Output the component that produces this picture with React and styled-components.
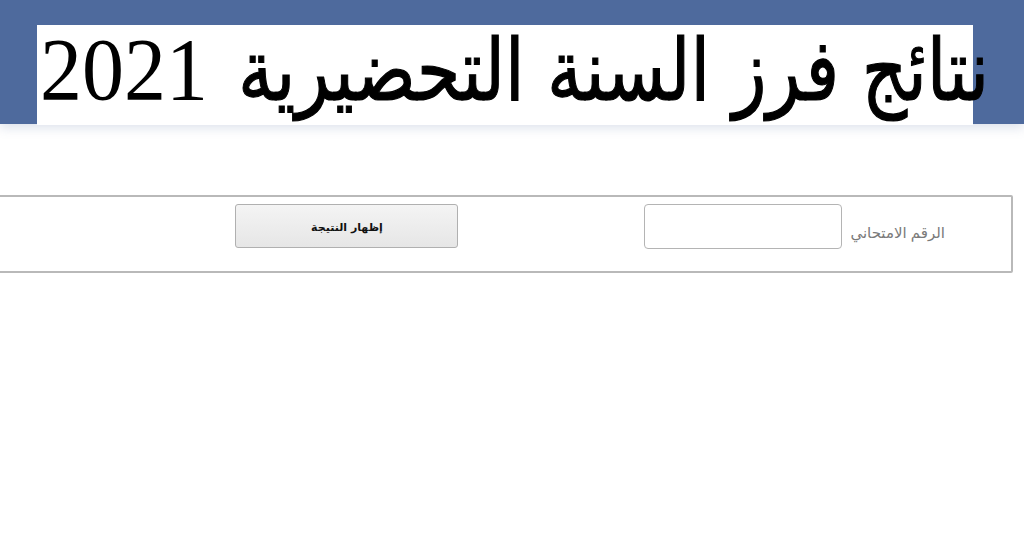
import React from "react";
import styled, { createGlobalStyle } from "styled-components";

const Global = createGlobalStyle`
  html, body { margin: 0; padding: 0; background: #ffffff; }
  body { width: 1024px; height: 558px; overflow: hidden; font-family: "Liberation Sans", "DejaVu Sans", sans-serif; }
`;

const Page = styled.div`
  width: 1024px;
  height: 558px;
  background: #ffffff;
  overflow: hidden;
  display: flex;
  flex-direction: column;
`;

const Banner = styled.header`
  height: 124px;
  background: #4e6a9d;
  padding: 25px 0 0 37px;
  box-sizing: border-box;
  position: relative;
  box-shadow: 0 4px 10px rgba(120, 140, 180, 0.25);
`;

const TitleBox = styled.div`
  width: 936px;
  height: 100px;
  background: #ffffff;
  display: flex;
  align-items: center;
  padding-left: 3px;
  box-sizing: border-box;
`;

const Title = styled.h1`
  margin: 0;
  flex: none;
  display: flex;
  align-items: baseline;
  white-space: nowrap;
  font-weight: normal;
  line-height: 1;
  color: #000000;
  position: relative;
  top: -5px;
`;

const Year = styled.span`
  order: 1;
  font-family: "Liberation Serif", serif;
  font-size: 84px;
  transform: scaleY(1.05);
  display: inline-block;
  transform-origin: center bottom;
  margin-right: 30px;
`;

const Words = styled.span`
  order: 2;
  display: inline-block;
  font-family: "DejaVu Sans", sans-serif;
  font-size: 86px;
  transform: scaleX(0.82);
  transform-origin: left center;
  -webkit-text-stroke: 1.2px #000;
`;

const Panel = styled.form`
  margin: 71px 0 0 -10px;
  width: 1023px;
  height: 78px;
  box-sizing: border-box;
  border: 2px solid #b9b9b9;
  border-radius: 2px;
  display: flex;
  align-items: flex-start;
  padding: 7px 66px 0 0;
`;

const Label = styled.span`
  font-size: 15px;
  color: #7a7a7a;
  margin: 20px 0 0 8px;
  white-space: nowrap;
`;

const Field = styled.input`
  width: 198px;
  height: 45px;
  box-sizing: border-box;
  border: 1.5px solid #b4b4b4;
  border-radius: 4px;
  background: #fff;
  margin: 0 0 0 186px;
  outline: none;
`;

const Button = styled.button`
  width: 223px;
  height: 44px;
  box-sizing: border-box;
  border: 1.5px solid #b0b0b0;
  border-radius: 3px;
  background: linear-gradient(#f4f4f4, #e6e6e6);
  font-family: "DejaVu Sans", sans-serif;
  font-weight: bold;
  font-size: 11px;
  color: #111;
  padding: 3px 0 0;
`;

export default function App() {
  return (
    <Page>
      <Global />
      <Banner>
        <TitleBox>
          <Title>
            <Words dir="rtl">نتائج فرز السنة التحضيرية</Words>
            <Year>2021</Year>
          </Title>
        </TitleBox>
      </Banner>
      <Panel dir="rtl" onSubmit={(e) => e.preventDefault()}>
        <Label>الرقم الامتحاني</Label>
        <Field type="text" />
        <Button type="submit">إظهار النتيجة</Button>
      </Panel>
    </Page>
  );
}
